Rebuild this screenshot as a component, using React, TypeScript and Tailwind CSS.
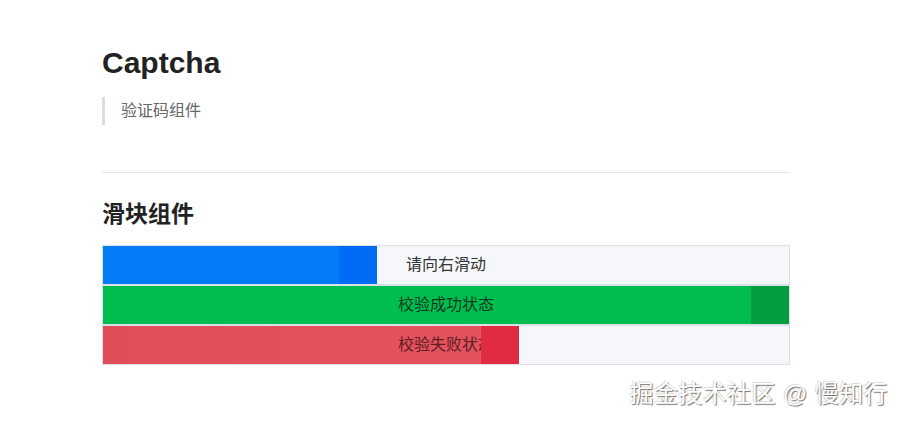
import React from 'react';

interface SliderRowProps {
  fill: number;
  text: string;
  fillClass: string;
  handleClass: string;
  textClass: string;
}

const SliderRow: React.FC<SliderRowProps> = ({ fill, text, fillClass, handleClass, textClass }) => {
  return (
    <div className="relative h-[40px] border border-[#dcdfe6] bg-[#f5f7fa] overflow-hidden">
      <div className={`absolute left-0 top-0 h-full ${fillClass}`} style={{ width: fill }} />
      <div className={`relative h-full flex items-center justify-center text-[16px] ${textClass}`}>{text}</div>
      <div className={`absolute top-0 h-full w-[38px] ${handleClass}`} style={{ left: fill - 38 }} />
    </div>
  );
};

const App: React.FC = () => {
  return (
    <div
      className="relative w-[904px] h-[422px] bg-white overflow-hidden"
      style={{ fontFamily: '"Liberation Sans", "Noto Sans CJK SC", sans-serif' }}
    >
      <div className="ml-[102px] w-[688px] pt-[45px]">
        <h1 className="text-[30px] leading-[36px] font-bold text-[#222]">Captcha</h1>

        <div className="mt-[16px] h-[28px] border-l-[3px] border-[#dddddd] pl-[16px] flex items-center text-[16px] text-[#666]">
          验证码组件
        </div>

        <div className="mt-[47px] h-px bg-[#e5e5e5]" />

        <h2 className="mt-[25px] text-[23px] leading-[32px] font-bold text-[#222]">滑块组件</h2>

        <div className="mt-[15px]">
          <SliderRow
            fill={274}
            text="请向右滑动"
            fillClass="bg-[#047cf8]"
            handleClass="bg-[#006cf5]"
            textClass="text-[#333]"
          />
          <SliderRow
            fill={686}
            text="校验成功状态"
            fillClass="bg-[#00bd4f]"
            handleClass="bg-[#009e3f]"
            textClass="text-[#0b3b1f]"
          />
          <SliderRow
            fill={416}
            text="校验失败状态"
            fillClass="bg-gradient-to-r from-[#e04e5a] to-[#e6535f]"
            handleClass="bg-[#e02b40]"
            textClass="text-[#5c1c22]"
          />
        </div>
      </div>

      <div
        className="absolute right-[16px] bottom-[13px] text-[24px] leading-[30px] tracking-[0.4px] text-white"
        style={{ textShadow: '1px 1px 1px rgba(0,0,0,0.55), -1px -1px 1px rgba(0,0,0,0.15)' }}
      >
        掘金技术社区 @ 慢知行
      </div>
    </div>
  );
};

export default App;
